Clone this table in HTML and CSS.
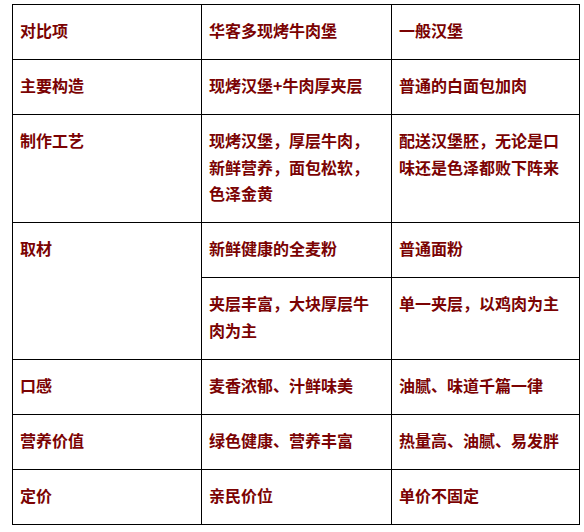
FILE: index.html
```html
<!DOCTYPE html>
<html lang="zh-CN">
<head>
<meta charset="utf-8">
<title>对比</title>
<link rel="stylesheet" href="styles.css">
</head>
<body>
<div class="page">
  <table class="compare">
    <colgroup>
      <col class="c1">
      <col class="c2">
      <col class="c3">
    </colgroup>
    <tr>
      <td>对比项</td>
      <td>华客多现烤牛肉堡</td>
      <td>一般汉堡</td>
    </tr>
    <tr>
      <td>主要构造</td>
      <td>现烤汉堡+牛肉厚夹层</td>
      <td>普通的白面包加肉</td>
    </tr>
    <tr>
      <td>制作工艺</td>
      <td>现烤汉堡，厚层牛肉，新鲜营养，面包松软，色泽金黄</td>
      <td>配送汉堡胚，无论是口味还是色泽都败下阵来</td>
    </tr>
    <tr>
      <td rowspan="2">取材</td>
      <td>新鲜健康的全麦粉</td>
      <td>普通面粉</td>
    </tr>
    <tr>
      <td>夹层丰富，大块厚层牛肉为主</td>
      <td>单一夹层，以鸡肉为主</td>
    </tr>
    <tr>
      <td>口感</td>
      <td>麦香浓郁、汁鲜味美</td>
      <td>油腻、味道千篇一律</td>
    </tr>
    <tr>
      <td>营养价值</td>
      <td>绿色健康、营养丰富</td>
      <td>热量高、油腻、易发胖</td>
    </tr>
    <tr>
      <td>定价</td>
      <td>亲民价位</td>
      <td>单价不固定</td>
    </tr>
  </table>
</div>
</body>
</html>
```
FILE: styles.css
```css
html, body {
  margin: 0;
  padding: 0;
  background: #ffffff;
}

.page {
  padding: 4px 0 0 12px;
}

.compare {
  border-collapse: collapse;
  table-layout: fixed;
  width: 567px;
  font-family: "Microsoft YaHei", "Noto Sans CJK SC", "Noto Sans", sans-serif;
  font-size: 16px;
  font-weight: bold;
  color: #7b0303;
}

.c1 { width: 189px; }
.c2 { width: 190px; }
.c3 { width: 188px; }

.compare td {
  border: 1px solid #000000;
  padding: 12px 10px 15.5px 7px;
  line-height: 26.5px;
  vertical-align: top;
  text-align: left;
}
```
